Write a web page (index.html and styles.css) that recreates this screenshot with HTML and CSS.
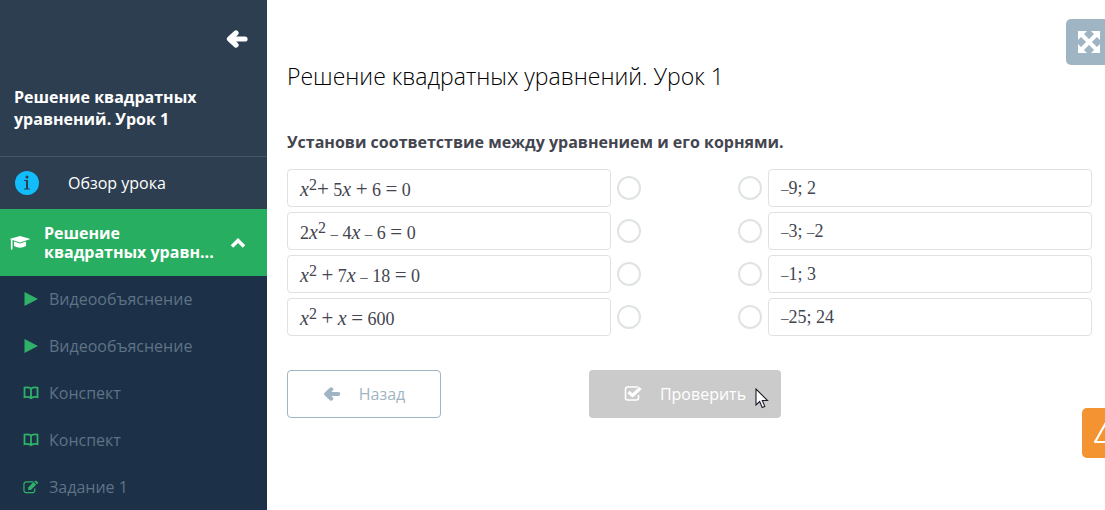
FILE: index.html
```html
<!DOCTYPE html>
<html lang="ru">
<head>
  <meta charset="UTF-8" />
  <meta name="viewport" content="width=device-width, initial-scale=1.0"/>
  <title>Решение квадратных уравнений. Урок 1</title>
  <link rel="stylesheet" href="styles.css">
</head>
<body>
  <!-- shared icons -->
  <svg class="sprite" aria-hidden="true">
    <symbol id="i-arrow" viewBox="0 0 22 18">
      <path d="M10 3 L3.500 9 L10 15 M4 9 H19" fill="none" stroke="currentColor" stroke-width="5.200" stroke-linecap="round" stroke-linejoin="round"/>
    </symbol>
    <symbol id="i-play" viewBox="0 0 14 14">
      <path d="M0.500 0 L14 7 L0.500 14 Z" fill="currentColor"/>
    </symbol>
    <symbol id="i-book" viewBox="0 0 16 14">
      <path d="M8 2.500 C6 1.300 3.500 1.200 1.500 1.700 V11.200 C3.500 10.700 6 10.900 8 12.200 C10 10.900 12.500 10.700 14.500 11.200 V1.700 C12.500 1.200 10 1.300 8 2.500 V12" fill="none" stroke="currentColor" stroke-width="1.800"/>
    </symbol>
    <symbol id="i-edit" viewBox="0 0 17 14">
      <path d="M11 1.500 H3.500 A2.500 2.500 0 0 0 1 4 V10.500 A2.500 2.500 0 0 0 3.500 13 H10 A2.500 2.500 0 0 0 12.500 10.500 V8.500" fill="none" stroke="currentColor" stroke-width="1.300"/>
      <path d="M5.500 10.300 V7.500 L11.200 1.800 L14 4.600 L8.300 10.300 Z M12 1.200 L13 0.400 Q13.600 0 14.200 0.500 L15.800 2 Q16.300 2.700 15.800 3.200 L14.800 4 Z" fill="currentColor"/>
    </symbol>
  </svg>

  <div class="page">
    <aside class="sidebar">
      <div class="sidebar-head">
        <button class="collapse" type="button" aria-label="Свернуть меню">
          <svg width="22" height="18"><use href="#i-arrow"/></svg>
        </button>
        <h2>Решение квадратных уравнений. Урок 1</h2>
      </div>

      <nav>
        <a class="overview" href="#overview">
          <svg width="24" height="24" viewBox="0 0 24 24" aria-hidden="true">
            <circle cx="12" cy="12" r="12" fill="#11bdfb"/>
            <path d="M9 9 H13 V17.500 H15 V18.500 H9 V17.500 H11 V10 H9 Z" fill="#2d3e50"/>
            <circle cx="12" cy="6" r="1.500" fill="#2d3e50"/>
          </svg>
          <span>Обзор урока</span>
        </a>

        <a class="section" href="#lesson">
          <svg width="22" height="16" viewBox="0 0 22 16" aria-hidden="true">
            <path d="M11 1 L21.500 4 L11 7.500 L0.500 4 Z" fill="#fff"/>
            <path d="M5 6.500 L11 8.500 L17 6.500 V11 Q11 14.500 5 11 Z" fill="#fff"/>
            <path d="M2.700 4.500 V14.500" stroke="#fff" stroke-width="1.600"/>
          </svg>
          <span>Решение квадратных уравн...</span>
          <svg width="16" height="12" viewBox="0 0 16 12" aria-hidden="true">
            <path d="M2 9.500 L8 3.500 L14 9.500" fill="none" stroke="#fff" stroke-width="3.600"/>
          </svg>
        </a>

        <ul class="steps">
          <li><a href="#video1"><svg width="16" height="14"><use href="#i-play"/></svg>Видеообъяснение</a></li>
          <li><a href="#video2"><svg width="16" height="14"><use href="#i-play"/></svg>Видеообъяснение</a></li>
          <li><a href="#notes1"><svg width="16" height="14"><use href="#i-book"/></svg>Конспект</a></li>
          <li><a href="#notes2"><svg width="16" height="14"><use href="#i-book"/></svg>Конспект</a></li>
          <li><a href="#task1"><svg width="16" height="14"><use href="#i-edit"/></svg>Задание 1</a></li>
        </ul>
      </nav>
    </aside>

    <main class="content">
      <h1>Решение квадратных уравнений. Урок 1</h1>
      <p class="task">Установи соответствие между уравнением и его корнями.</p>

      <form>
        <div class="match">
          <div class="column">
            <div class="row">
              <label for="q1"><i>x</i><sup>2</sup><span class="op">+</span> 5<i>x</i> <span class="op">+</span> 6 <span class="op">=</span> 0</label>
              <input type="radio" name="equation" id="q1">
            </div>
            <div class="row">
              <label for="q2">2<i>x</i><sup>2</sup> <span class="minus">–</span> 4<i>x</i> <span class="minus">–</span> 6 <span class="op">=</span> 0</label>
              <input type="radio" name="equation" id="q2">
            </div>
            <div class="row">
              <label for="q3"><i>x</i><sup>2</sup> <span class="op">+</span> 7<i>x</i> <span class="minus">–</span> 18 <span class="op">=</span> 0</label>
              <input type="radio" name="equation" id="q3">
            </div>
            <div class="row">
              <label for="q4"><i>x</i><sup>2</sup> <span class="op">+</span> <i>x</i> <span class="op">=</span> 600</label>
              <input type="radio" name="equation" id="q4">
            </div>
          </div>

          <div class="column answers">
            <div class="row">
              <input type="radio" name="roots" id="a1">
              <label for="a1"><span class="minus">–</span>9; 2</label>
            </div>
            <div class="row">
              <input type="radio" name="roots" id="a2">
              <label for="a2"><span class="minus">–</span>3; <span class="minus">–</span>2</label>
            </div>
            <div class="row">
              <input type="radio" name="roots" id="a3">
              <label for="a3"><span class="minus">–</span>1; 3</label>
            </div>
            <div class="row">
              <input type="radio" name="roots" id="a4">
              <label for="a4"><span class="minus">–</span>25; 24</label>
            </div>
          </div>
        </div>

        <div class="actions">
          <button class="btn back" type="button">
            <svg width="18" height="14"><use href="#i-arrow"/></svg>
            Назад
          </button>
          <button class="btn check" type="button">
            <svg width="18" height="16" viewBox="0 0 18 16" aria-hidden="true">
              <path d="M14.500 9 V12 A2 2 0 0 1 12.500 14 H3.500 A2 2 0 0 1 1.500 12 V3 A2 2 0 0 1 3.500 1 H14" fill="none" stroke="#fff" stroke-width="1.600"/>
              <path d="M4.500 6 L8.500 9.500 L16.500 2" fill="none" stroke="#fff" stroke-width="3.200"/>
            </svg>
            Проверить
            <svg class="cursor" width="14" height="21" viewBox="0 0 14 21" aria-hidden="true">
              <path d="M1 1 V17 L4.700 13.500 L7.200 19.500 L9.800 18.400 L7.300 12.500 H12.500 Z" fill="#fff" stroke="#1c1c2a" stroke-width="1.100"/>
            </svg>
          </button>
        </div>
      </form>
    </main>
  </div>

  <button class="fullscreen" type="button" aria-label="На весь экран">
    <svg width="22" height="22" viewBox="0 0 22 22" aria-hidden="true">
      <path d="M0 0 H9 L0 9 Z M22 0 V9 L13 0 Z M0 22 V13 L9 22 Z M22 22 H13 L22 13 Z" fill="#fff"/>
      <path d="M4 4 L18 18 M18 4 L4 18" stroke="#fff" stroke-width="4"/>
    </svg>
  </button>
  <button class="feedback" type="button" aria-label="Сообщить об ошибке">
    <svg width="28" height="26" viewBox="0 0 28 26" aria-hidden="true">
      <path d="M14 1 L26 22 H2 Z" fill="none" stroke="#fff" stroke-width="2.200" stroke-linejoin="round"/>
    </svg>
  </button>
</body>
</html>
```
FILE: styles.css
```css
:root {
  --side-bg: #2d3e50;
  --steps-bg: #1c3047;
  --green: #27ae60;
  --muted: #9fb5c3;
  --line: #dfe1e3;
  --text: #43454f;
}

* {
  box-sizing: border-box;
}

body {
  margin: 0;
  font-family: "Open Sans", "Noto Sans", sans-serif;
  font-size: 16px;
  color: var(--text);
  background: #fff;
}

a {
  color: inherit;
  text-decoration: none;
}

button {
  font: inherit;
  border: none;
  padding: 0;
  cursor: pointer;
}

svg {
  flex: none;
}

.sprite {
  position: absolute;
  width: 0;
  height: 0;
}

.page {
  display: flex;
  min-height: 100vh;
}

/* Sidebar */
.sidebar {
  flex: 0 0 267px;
  height: 100vh;
  overflow: hidden;
  background: var(--steps-bg);
  color: #fff;
}

.sidebar-head {
  display: flex;
  flex-direction: column;
  padding: 30px 19px 26px 14px;
  background: var(--side-bg);
  border-bottom: 1px solid #45566a;
}

.collapse {
  align-self: flex-end;
  display: flex;
  color: #fff;
  background: none;
}

.sidebar-head h2 {
  margin: 38px 0 0;
  font-size: 16px;
  line-height: 22px;
  font-weight: 700;
}

.overview {
  display: flex;
  align-items: center;
  gap: 29px;
  height: 52px;
  padding-left: 15px;
  background: var(--side-bg);
}

.section {
  display: flex;
  align-items: center;
  gap: 13px;
  padding: 15px 21px 14px 9px;
  font-weight: 700;
  line-height: 19px;
  background: var(--green);
}

.section span {
  flex: 1;
}

.steps {
  list-style: none;
  margin: 0;
  padding: 0;
}

.steps a {
  display: flex;
  align-items: center;
  gap: 10px;
  height: 47px;
  padding: 0 0 2px 23px;
  color: #5f7386;
}

.steps svg {
  color: #2fb169;
}

/* Lesson */
.content {
  flex: 1;
  padding: 61px 13px 20px 20px;
}

h1 {
  margin: 0;
  font-size: 23px;
  line-height: 30px;
  font-weight: 300;
  color: #000;
}

.task {
  margin: 40px 0 16px;
  line-height: 22px;
  font-weight: 700;
}

.match {
  display: grid;
  grid-template-columns: 1fr 1fr;
  gap: 97px;
}

.column {
  display: flex;
  flex-direction: column;
  gap: 5px;
}

.row {
  display: flex;
  align-items: center;
  gap: 6px;
}

.row label {
  flex: 1;
  height: 38px;
  padding: 2px 12px 0;
  border: 1px solid var(--line);
  border-radius: 4px;
  font-family: "Liberation Serif", serif;
  font-size: 18px;
  line-height: 36px;
}

.answers label {
  padding-top: 0;
}

.row i {
  font-size: 20px;
  line-height: 1;
}

.row sup {
  font-size: 16px;
  line-height: 0;
  vertical-align: 6px;
}

.op {
  font-size: 21px;
  line-height: 1;
}

.minus {
  font-size: 15px;
  line-height: 1;
}

.row input {
  appearance: none;
  width: 24px;
  height: 24px;
  margin: 0;
  border: 2px solid #e0e3e4;
  border-radius: 50%;
}

.row input:checked {
  border-color: var(--green);
}

.actions {
  display: flex;
  gap: 148px;
  margin-top: 34px;
}

.btn {
  position: relative;
  display: flex;
  align-items: center;
  justify-content: center;
  gap: 18px;
  height: 48px;
  border-radius: 4px;
}

.back {
  width: 154px;
  color: var(--muted);
  background: #fff;
  border: 1px solid var(--muted);
}

.check {
  width: 192px;
  color: #fff;
  background: #cbcbcb;
}

.cursor {
  position: absolute;
  right: 12px;
  top: 18px;
}

/* Buttons on the right edge of the window */
.fullscreen,
.feedback {
  position: fixed;
  right: 0;
  display: flex;
  align-items: center;
  overflow: hidden;
  border-radius: 5px 0 0 5px;
}

.fullscreen {
  top: 19px;
  width: 39px;
  height: 46px;
  padding-left: 12px;
  background: #9fb5c3;
}

.feedback {
  top: 408px;
  width: 23px;
  height: 50px;
  padding-left: 11px;
  background: #f39332;
}
```
